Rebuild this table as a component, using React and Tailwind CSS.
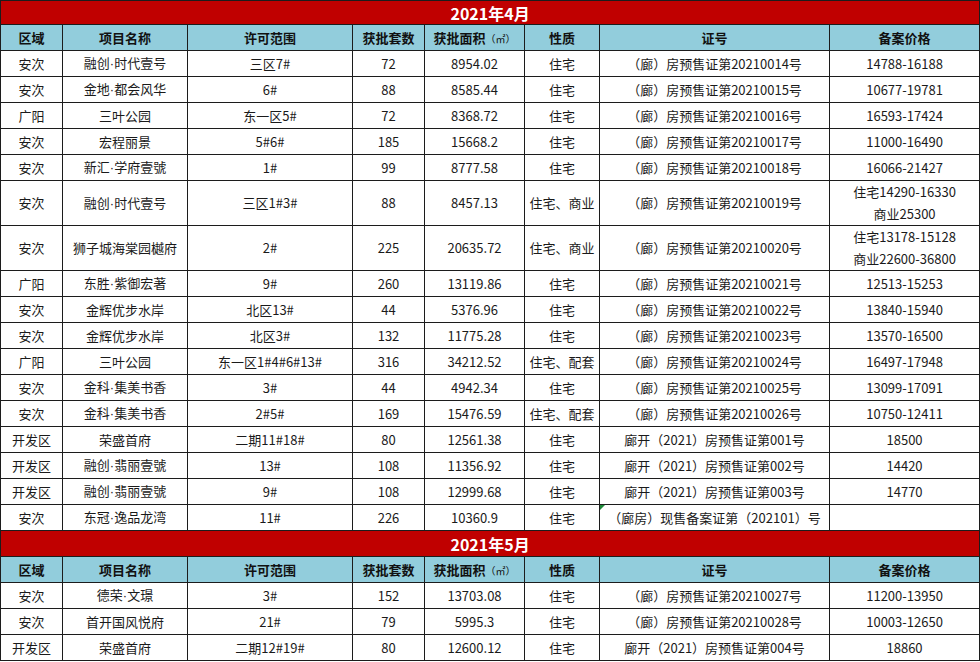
const april = [
  ["安次", "融创·时代壹号", "三区7#", "72", "8954.02", "住宅", "（廊）房预售证第20210014号", "14788-16188"],
  ["安次", "金地·都会风华", "6#", "88", "8585.44", "住宅", "（廊）房预售证第20210015号", "10677-19781"],
  ["广阳", "三叶公园", "东一区5#", "72", "8368.72", "住宅", "（廊）房预售证第20210016号", "16593-17424"],
  ["安次", "宏程丽景", "5#6#", "185", "15668.2", "住宅", "（廊）房预售证第20210017号", "11000-16490"],
  ["安次", "新汇·学府壹號", "1#", "99", "8777.58", "住宅", "（廊）房预售证第20210018号", "16066-21427"],
  ["安次", "融创·时代壹号", "三区1#3#", "88", "8457.13", "住宅、商业", "（廊）房预售证第20210019号", ["住宅14290-16330", "商业25300"]],
  ["安次", "狮子城海棠园樾府", "2#", "225", "20635.72", "住宅、商业", "（廊）房预售证第20210020号", ["住宅13178-15128", "商业22600-36800"]],
  ["广阳", "东胜·紫御宏著", "9#", "260", "13119.86", "住宅", "（廊）房预售证第20210021号", "12513-15253"],
  ["安次", "金辉优步水岸", "北区13#", "44", "5376.96", "住宅", "（廊）房预售证第20210022号", "13840-15940"],
  ["安次", "金辉优步水岸", "北区3#", "132", "11775.28", "住宅", "（廊）房预售证第20210023号", "13570-16500"],
  ["广阳", "三叶公园", "东一区1#4#6#13#", "316", "34212.52", "住宅、配套", "（廊）房预售证第20210024号", "16497-17948"],
  ["安次", "金科·集美书香", "3#", "44", "4942.34", "住宅", "（廊）房预售证第20210025号", "13099-17091"],
  ["安次", "金科·集美书香", "2#5#", "169", "15476.59", "住宅、配套", "（廊）房预售证第20210026号", "10750-12411"],
  ["开发区", "荣盛首府", "二期11#18#", "80", "12561.38", "住宅", "廊开（2021）房预售证第001号", "18500"],
  ["开发区", "融创·翡丽壹號", "13#", "108", "11356.92", "住宅", "廊开（2021）房预售证第002号", "14420"],
  ["开发区", "融创·翡丽壹號", "9#", "108", "12999.68", "住宅", "廊开（2021）房预售证第003号", "14770"],
  ["安次", "东冠·逸品龙湾", "11#", "226", "10360.9", "住宅", "（廊房）现售备案证第（202101）号", "", true],
];

const may = [
  ["安次", "德荣·文璟", "3#", "152", "13703.08", "住宅", "（廊）房预售证第20210027号", "11200-13950"],
  ["安次", "首开国风悦府", "21#", "79", "5995.3", "住宅", "（廊）房预售证第20210028号", "10003-12650"],
  ["开发区", "荣盛首府", "二期12#19#", "80", "12600.12", "住宅", "廊开（2021）房预售证第004号", "18860"],
];

const widths = ["w-[62px]", "w-[125px]", "w-[165px]", "w-[72px]", "w-[100px]", "w-[75px]", "w-[230px]", "w-[150px]"];

const cell = "border border-[#1c1c1c] text-center align-middle p-0 whitespace-nowrap";

// project names use a narrow middle dot, not the full-width CJK one
function Name({ text }) {
  const parts = text.split("·");
  if (parts.length === 1) return text;
  return (
    <>
      {parts[0]}
      <span style={{ fontFamily: '"Liberation Sans", sans-serif' }}>·</span>
      {parts[1]}
    </>
  );
}

function TitleRow({ label, first }) {
  return (
    <tr className={first ? "h-[24px]" : "h-[26px]"}>
      <td colSpan={8} className="border border-[#1c1c1c] bg-[#c00000] text-center text-white font-bold text-[16px] leading-[20px]">
        {label}
      </td>
    </tr>
  );
}

function HeadRow() {
  return (
    <tr className="h-[26px] bg-[#92cddc] font-bold text-[13px] text-[#111]">
      <td className={cell}>区域</td>
      <td className={cell}>项目名称</td>
      <td className={cell}>许可范围</td>
      <td className={cell}>获批套数</td>
      <td className={cell}>
        获批面积<span className="font-normal text-[10px]">（㎡）</span>
      </td>
      <td className={cell}>性质</td>
      <td className={cell}>证号</td>
      <td className={cell}>备案价格</td>
    </tr>
  );
}

function DataRow({ row }) {
  const price = row[7];
  const tall = Array.isArray(price);
  return (
    <tr className={tall ? "h-[44px]" : "h-[26px]"}>
      <td className={cell}>{row[0]}</td>
      <td className={cell}>
        <Name text={row[1]} />
      </td>
      {row.slice(2, 6).map((v, i) => (
        <td key={i} className={cell}>{v}</td>
      ))}
      <td className={cell + " relative"}>
        {row[8] && (
          <span className="absolute left-0 top-0 w-0 h-0 border-t-[5px] border-t-[#1f8b3a] border-r-[5px] border-r-transparent" />
        )}
        {row[6]}
      </td>
      <td className={cell + (tall ? " leading-[22px]" : "")}>
        {tall ? price.map((p) => <div key={p}>{p}</div>) : price}
      </td>
    </tr>
  );
}

export default function App() {
  return (
    <div className="w-[980px] h-[662px] bg-white overflow-hidden" style={{ fontFamily: '"Noto Sans CJK SC", "Noto Sans", sans-serif' }}>
      <table className="table-fixed border-collapse w-[980px] text-[13px] text-[#1a1a1a]">
        <colgroup>
          {widths.map((w, i) => (
            <col key={i} className={w} />
          ))}
        </colgroup>
        <tbody>
          <TitleRow label="2021年4月" first />
          <HeadRow />
          {april.map((r, i) => (
            <DataRow key={i} row={r} />
          ))}
          <TitleRow label="2021年5月" />
          <HeadRow />
          {may.map((r, i) => (
            <DataRow key={i} row={r} />
          ))}
        </tbody>
      </table>
    </div>
  );
}
